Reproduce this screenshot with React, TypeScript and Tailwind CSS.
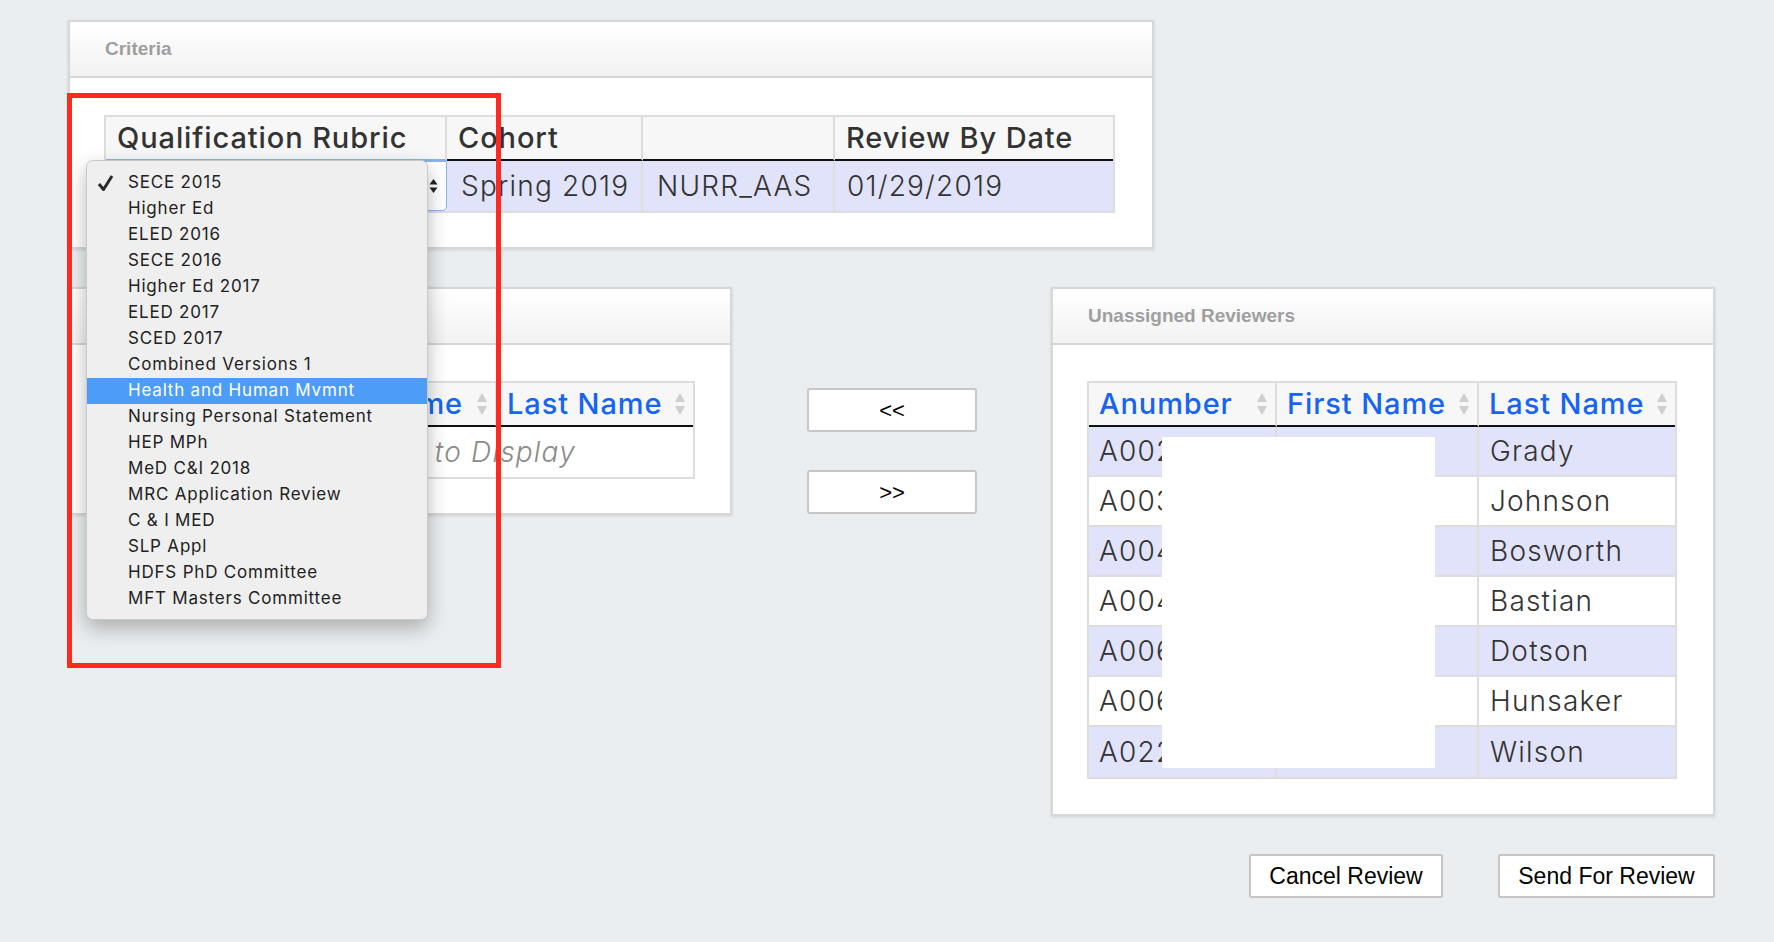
import React from "react";

const rubricOptions = [
  "SECE 2015",
  "Higher Ed",
  "ELED 2016",
  "SECE 2016",
  "Higher Ed 2017",
  "ELED 2017",
  "SCED 2017",
  "Combined Versions 1",
  "Health and Human Mvmnt",
  "Nursing Personal Statement",
  "HEP MPh",
  "MeD C&I 2018",
  "MRC Application Review",
  "C & I MED",
  "SLP Appl",
  "HDFS PhD Committee",
  "MFT Masters Committee",
];

const unassigned = [
  { anumber: "A00214587", last: "Grady" },
  { anumber: "A00337719", last: "Johnson" },
  { anumber: "A00410273", last: "Bosworth" },
  { anumber: "A00448120", last: "Bastian" },
  { anumber: "A00602854", last: "Dotson" },
  { anumber: "A00671130", last: "Hunsaker" },
  { anumber: "A02203316", last: "Wilson" },
];

function SortArrows() {
  return (
    <svg width="12" height="24" viewBox="0 0 12 24" className="shrink-0">
      <path d="M6 1 L11 10 H1 Z" fill="#cfcfcf" />
      <path d="M1 14 H11 L6 23 Z" fill="#cfcfcf" />
    </svg>
  );
}

function Panel({
  title,
  className,
  bodyClass,
  children,
}: {
  title: string;
  className: string;
  bodyClass: string;
  children: React.ReactNode;
}) {
  return (
    <div className={`border-2 border-[#d6d7d8] bg-white shadow-[0_1px_3px_rgba(0,0,0,0.12)] ${className}`}>
      <div className="h-[56px] border-b-2 border-[#d6d6d6] bg-gradient-to-b from-white to-[#f2f2f2] flex items-center pl-[35px]">
        <span className="text-[19px] font-bold text-[#9f9f9f]">{title}</span>
      </div>
      <div className={bodyClass}>{children}</div>
    </div>
  );
}

function ReviewerHeader() {
  return (
    <>
      {["Anumber", "First Name", "Last Name"].map((h, i) => (
        <div
          key={h}
          className={`h-[44px] bg-[#f7f7f7] border-b-2 border-b-[#111] flex items-center justify-between pl-[10px] pr-[7px] text-[29px] tracking-[0.9px] font-medium text-[#1565f2] ${
            i < 2 ? "border-r-2 border-r-[#dddddd]" : ""
          }`}
        >
          <span>{h}</span>
          <SortArrows />
        </div>
      ))}
    </>
  );
}

export default function App() {
  return (
    <div className="min-h-screen w-full bg-[#ebeef0] font-['Liberation_Sans',Arial,sans-serif]">
      <div className="relative w-[1774px] h-[942px] pl-[68px] pt-[20px]">
        {/* Criteria */}
        <Panel title="Criteria" className="w-[1086px]" bodyClass="pt-[37px] pb-[34px] pl-[34px]">
          <div className="w-[1011px] border-2 border-[#dddddd] grid grid-cols-[341px_196px_192px_278px] font-['Inter',sans-serif] text-[#333]">
            <div className="h-[44px] bg-[#f7f7f7] border-b-2 border-b-[#8ab4e8] border-r-2 border-r-[#dddddd] flex items-center pl-[11px] text-[29px] tracking-[0.9px] font-medium">
              Qualification Rubric
            </div>
            <div className="h-[44px] bg-[#f7f7f7] border-b-2 border-b-[#111] border-r-2 border-r-[#dddddd] flex items-center pl-[11px] text-[29px] tracking-[0.9px] font-medium">
              Cohort
            </div>
            <div className="h-[44px] bg-[#f7f7f7] border-b-2 border-b-[#111] border-r-2 border-r-[#dddddd]" />
            <div className="h-[44px] bg-[#f7f7f7] border-b-2 border-b-[#111] flex items-center pl-[11px] text-[29px] tracking-[0.9px] font-medium">
              Review By Date
            </div>

            <div className="h-[50px] bg-white border border-[#8ab4e8] rounded-b-[4px] flex items-center justify-end pr-[8px]">
              <svg width="9" height="16" viewBox="0 0 9 16">
                <path d="M4.5 1 L8.5 6.5 H0.5 Z" fill="#222" />
                <path d="M0.5 9.5 H8.5 L4.5 15 Z" fill="#222" />
              </svg>
            </div>
            <div className="h-[50px] bg-[#e1e3fb] border-r-2 border-r-[#dddddd] flex items-center pl-[14px] text-[28px] tracking-[1.2px] font-light">
              Spring 2019
            </div>
            <div className="h-[50px] bg-[#e1e3fb] border-r-2 border-r-[#dddddd] flex items-center pl-[14px] text-[28px] tracking-[1.2px] font-light">
              NURR_AAS
            </div>
            <div className="h-[50px] bg-[#e1e3fb] flex items-center pl-[12px] text-[28px] tracking-[1.2px] font-light">
              01/29/2019
            </div>
          </div>
        </Panel>

        <div className="mt-[38px] flex items-start">
          {/* Assigned reviewers */}
          <Panel title="Assigned Reviewers" className="w-[664px]" bodyClass="pt-[36px] pb-[34px] pl-[34px]">
            <div className="w-[591px] border-2 border-[#dddddd] grid grid-cols-[188px_203px_196px] font-['Inter',sans-serif]">
              <ReviewerHeader />
              <div className="col-span-3 h-[50px] bg-white flex items-center justify-end pr-[117px] whitespace-nowrap text-[28px] tracking-[1.2px] font-light italic text-[#8a8a8a]">
                No Reviewers to Display
              </div>
            </div>
          </Panel>

          {/* Move buttons */}
          <div className="ml-[75px] pt-[101px] flex flex-col gap-[38px]">
            <button className="w-[170px] h-[44px] border-2 border-[#c6c6c6] rounded-[3px] bg-white text-[22px] text-black">
              &lt;&lt;
            </button>
            <button className="w-[170px] h-[44px] border-2 border-[#c6c6c6] rounded-[3px] bg-white text-[22px] text-black">
              &gt;&gt;
            </button>
          </div>

          {/* Unassigned reviewers */}
          <Panel title="Unassigned Reviewers" className="ml-[74px] w-[664px]" bodyClass="pt-[36px] pb-[35px] pl-[34px]">
            <div className="w-[590px] border-2 border-[#dddddd] grid grid-cols-[188px_202px_196px] font-['Inter',sans-serif] text-[#333]">
              <ReviewerHeader />
              {unassigned.map((r, i) => {
                const bg = i % 2 === 0 ? "bg-[#e1e3fb]" : "bg-white";
                const line = i < unassigned.length - 1 ? "border-b-2 border-b-[#dddddd]" : "";
                return (
                  <React.Fragment key={i}>
                    <div className={`h-[50px] ${bg} ${line} border-r-2 border-r-[#dddddd] flex items-center pl-[10px] text-[28px] tracking-[1.2px] font-light overflow-hidden whitespace-nowrap`}>
                      {r.anumber}
                    </div>
                    <div className={`h-[50px] ${bg} ${line} border-r-2 border-r-[#dddddd]`} />
                    <div className={`h-[50px] ${bg} ${line} flex items-center pl-[11px] text-[28px] tracking-[1.2px] font-light`}>
                      {r.last}
                    </div>
                  </React.Fragment>
                );
              })}
            </div>
          </Panel>
        </div>

        <div className="mt-[38px] w-[1647px] flex justify-end gap-[55px]">
          <button className="w-[194px] h-[44px] border-2 border-[#c6c6c6] rounded-[2px] bg-white text-[23px] text-black">
            Cancel Review
          </button>
          <button className="w-[217px] h-[44px] border-2 border-[#c6c6c6] rounded-[2px] bg-white text-[23px] text-black">
            Send For Review
          </button>
        </div>

        {/* Redaction box */}
        <div className="absolute left-[1162px] top-[437px] w-[273px] h-[331px] bg-white" />

        {/* Open rubric dropdown */}
        <div className="absolute left-[86px] top-[160px] w-[342px] pt-[9px] pb-[7px] rounded-[7px] bg-[#efefef] border border-[#c9c9c9] shadow-[0_8px_20px_rgba(0,0,0,0.28)] font-['Inter',sans-serif] text-[17px] tracking-[0.8px] text-[#222]">
          {rubricOptions.map((opt, i) => (
            <div
              key={opt}
              className={`relative h-[26px] flex items-center pl-[41px] whitespace-nowrap ${
                i === 8 ? "bg-[#4c9cf8] text-white" : ""
              }`}
            >
              {i === 0 && (
                <svg width="17" height="18" viewBox="0 0 17 18" className="absolute left-[10px] top-[4px]">
                  <path d="M2 10 L6.5 15.5 L15 2" fill="none" stroke="#2a2a2a" strokeWidth="3" strokeLinejoin="round" />
                </svg>
              )}
              {opt}
            </div>
          ))}
        </div>

        {/* Annotation box */}
        <div className="absolute left-[67px] top-[93px] w-[434px] h-[575px] border-[5px] border-[#ff2a1f]" />
      </div>
    </div>
  );
}
